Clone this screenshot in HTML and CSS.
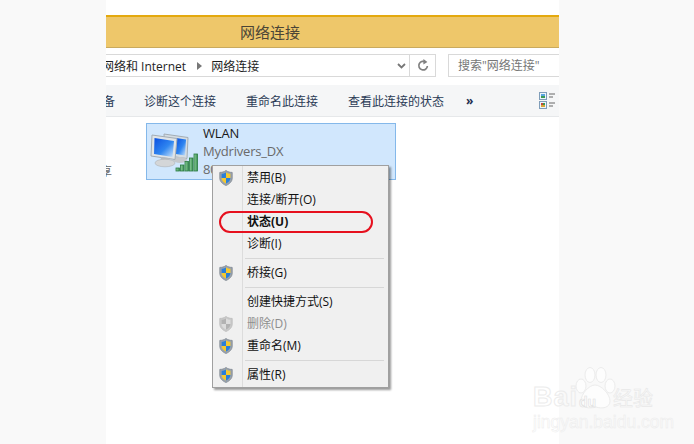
FILE: index.html
```html
<!DOCTYPE html>
<html lang="zh-CN">
<head>
    <meta charset="UTF-8">
    <title>网络连接</title>
    <link rel="stylesheet" href="styles.css">
</head>

<body>
    <svg class="defs">
        <defs>
            <symbol id="shield" viewBox="0 0 14 16">
                <path d="M7 .5C5 2 3 2.400 .8 2.400V8c0 3.600 2.600 5.900 6.200 7.500 3.600-1.600 6.200-3.900 6.200-7.500V2.400C11 2.400 9 2 7 .5z" fill="#9aa3ad" stroke="#7d8791" stroke-width=".8"/>
                <path d="M7 2.400C5.600 3.300 4.200 3.700 2.600 3.800V8H7z" fill="#2a7fd8"/>
                <path d="M7 2.400C8.400 3.300 9.800 3.700 11.400 3.800V8H7z" fill="#f5c92e"/>
                <path d="M2.600 8H7v5.500C4.400 12.300 2.600 10.600 2.600 8z" fill="#f5c92e"/>
                <path d="M11.400 8H7v5.500c2.600-1.200 4.400-2.900 4.400-5.500z" fill="#2a7fd8"/>
            </symbol>
            <linearGradient id="screen" x1="0" y1="0" x2="1" y2="1">
                <stop offset="0" stop-color="#0a4fe0"/>
                <stop offset=".55" stop-color="#2f86f0"/>
                <stop offset="1" stop-color="#cfe6fb"/>
            </linearGradient>
            <linearGradient id="bar" x1="0" y1="0" x2="1" y2="0">
                <stop offset="0" stop-color="#8fcf9c"/>
                <stop offset="1" stop-color="#3b8f52"/>
            </linearGradient>
        </defs>
    </svg>

    <div class="page">
        <div class="side"></div>

        <div class="win">
            <div class="titlebar"><span>网络连接</span></div>

            <div class="addr-row">
                <div class="addr">
                    <span class="crumb">网络和 Internet</span>
                    <svg class="crumb-arrow" width="5" height="8" viewBox="0 0 5 8"><path d="M0 0l5 4-5 4z" fill="#777"/></svg>
                    <span class="crumb-now">网络连接</span>
                    <div class="addr-drop">
                        <svg width="9" height="6" viewBox="0 0 9 6"><path d="M1 1l3.500 3.500L8 1" fill="none" stroke="#777" stroke-width="1.800"/></svg>
                    </div>
                    <div class="addr-refresh">
                        <svg width="12" height="13" viewBox="0 0 12 13"><path d="M8.800 3.300A4.300 4.300 0 1 0 10.400 7" fill="none" stroke="#808080" stroke-width="1.700"/><path d="M6.400 0l4 3-4 2.600z" fill="#808080"/></svg>
                    </div>
                </div>
                <div class="search">搜索"网络连接"</div>
            </div>

            <div class="toolbar">
                <span class="tool tool-cut">备</span>
                <span class="tool tool-a">诊断这个连接</span>
                <span class="tool tool-b">重命名此连接</span>
                <span class="tool tool-c">查看此连接的状态</span>
                <span class="tool-more">»</span>
                <svg class="views" width="17" height="17" viewBox="0 0 17 17">
                    <rect x=".5" y=".5" width="7" height="7" fill="#eef5fb" stroke="#7f9db9"/>
                    <rect x="2" y="4" width="4" height="2" fill="#3b9a57"/>
                    <rect x="2" y="2" width="4" height="2" fill="#5aa5e0"/>
                    <rect x=".5" y="9.500" width="7" height="7" fill="#eef5fb" stroke="#7f9db9"/>
                    <rect x="2" y="11" width="2" height="2" fill="#c9463c"/>
                    <rect x="4" y="11" width="2" height="2" fill="#3b9a57"/>
                    <rect x="2" y="13" width="4" height="2" fill="#d8a83a"/>
                    <path d="M10 2h6M10 5h4M10 11h6M10 14h4" stroke="#666" stroke-width="1"/>
                </svg>
            </div>

            <div class="content">
                <div class="nav-cut">享</div>
                <div class="conn">
                    <svg class="conn-icon" width="50" height="50" viewBox="0 0 50 50">
                        <path d="M14 6l24 3.500-1 21-22-3z" fill="#d5dde3" stroke="#a3adb5"/>
                        <path d="M26 10l10 1.500-1 16-9-1.500z" fill="url(#screen)"/>
                        <ellipse cx="30" cy="32" rx="7" ry="3" fill="#c6c9cc"/>
                        <path d="M2 7l25 3.500-2 21L1 28z" fill="#dfe4e8" stroke="#a3adb5"/>
                        <path d="M4.500 10l19.500 3-1.500 16L4 26z" fill="url(#screen)"/>
                        <path d="M11 29l8 1 .5 3.500-9-1z" fill="#b5babf"/>
                        <ellipse cx="15" cy="35" rx="10" ry="3.800" fill="#d4d6d8" stroke="#aeb2b6" stroke-width=".6"/>
                        <g fill="url(#bar)" stroke="#2a7a42" stroke-width=".8">
                            <rect x="26" y="40" width="3.500" height="3"/>
                            <rect x="30.500" y="37" width="3.500" height="6"/>
                            <rect x="35" y="33.500" width="3.500" height="9.500"/>
                            <rect x="39.500" y="30" width="3.500" height="13"/>
                            <rect x="44" y="26" width="3.500" height="17"/>
                        </g>
                    </svg>
                    <div class="conn-text">
                        <div class="conn-name">WLAN</div>
                        <div class="conn-sub">Mydrivers_DX</div>
                        <div class="conn-sub">802.11n</div>
                    </div>
                </div>
            </div>
        </div>

        <div class="side"></div>
    </div>

    <div class="menu">
        <div class="mi"><svg class="shield"><use href="#shield"/></svg>禁用(B)</div>
        <div class="mi">连接/断开(O)</div>
        <div class="mi mi-bold">状态(U)</div>
        <div class="mi">诊断(I)</div>
        <div class="sep"></div>
        <div class="mi"><svg class="shield"><use href="#shield"/></svg>桥接(G)</div>
        <div class="sep"></div>
        <div class="mi">创建快捷方式(S)</div>
        <div class="mi mi-off"><svg class="shield shield-off"><use href="#shield"/></svg>删除(D)</div>
        <div class="mi"><svg class="shield"><use href="#shield"/></svg>重命名(M)</div>
        <div class="sep"></div>
        <div class="mi"><svg class="shield"><use href="#shield"/></svg>属性(R)</div>
    </div>

    <div class="ring"></div>

    <div class="mark">
        <div class="mark-top">
            <span class="mark-bai">Bai</span>
            <svg class="mark-paw" width="42" height="46" viewBox="0 0 42 46">
                <g fill="#fdfdfd" stroke="#ececec">
                    <ellipse cx="15" cy="9" rx="5" ry="7.500"/>
                    <ellipse cx="26" cy="9" rx="5" ry="7.500"/>
                    <ellipse cx="6" cy="20" rx="5" ry="7"/>
                    <ellipse cx="35" cy="20" rx="5" ry="7"/>
                    <path d="M20 19c6 0 15 9 15 16 0 7-8 8-14 6-7 2-15 1-15-6 0-7 8-16 14-16z"/>
                </g>
            </svg>
            <span class="mark-du">du</span>
            <span class="mark-jy">经验</span>
        </div>
        <div class="mark-url">jingyan.baidu.com</div>
    </div>
</body>
</html>
```

FILE: styles.css
```css
body {
    margin: 0;
    height: 444px;
    overflow: hidden;
    background: #fff;
    color: #1e1e1e;
    font-family: "Open Sans", "Noto Sans CJK SC", sans-serif;
    font-size: 12px;
    position: relative;
}

.defs {
    position: absolute;
    width: 0;
    height: 0;
}

.page {
    display: grid;
    grid-template-columns: 106px 453px 1fr;
    height: 444px;
}

.side {
    background: #f9f9f9;
}

.win {
    padding-top: 15px;
    overflow: hidden;
}

.titlebar {
    height: 30px;
    border-top: 2px solid #e4a90e;
    border-bottom: 1px solid #c9aa5e;
    background: #eec76a;
    padding-left: 134px;
    font-size: 15px;
    line-height: 30px;
    color: #4a4436;
}

.addr-row {
    display: flex;
    margin-top: 6px;
    height: 23px;
}

.addr {
    width: 330px;
    display: flex;
    align-items: center;
    border: 1px solid #d9d9d9;
    border-left: none;
    box-sizing: border-box;
    overflow: hidden;
}

.crumb {
    margin-left: -4px;
    white-space: nowrap;
}

.crumb-arrow {
    margin: 0 9px 0 11px;
}

.crumb-now {
    white-space: nowrap;
}

.addr-drop {
    margin-left: auto;
    width: 15px;
    height: 100%;
    display: flex;
    align-items: center;
    justify-content: center;
}

.addr-refresh {
    width: 25px;
    height: 100%;
    border-left: 1px solid #d9d9d9;
    display: flex;
    align-items: center;
    justify-content: center;
}

.search {
    margin-left: 12px;
    flex: 1;
    border: 1px solid #d9d9d9;
    border-right: none;
    padding-left: 9px;
    line-height: 21px;
    color: #777;
}

.toolbar {
    position: relative;
    display: flex;
    align-items: center;
    margin-top: 8px;
    height: 31px;
    border-bottom: 1px solid #e6e8ea;
    background: #f5f6f7;
    color: #2a3a55;
    overflow: hidden;
    white-space: nowrap;
}

.tool-cut {
    margin-left: -3px;
}

.tool-a {
    margin-left: 29px;
}

.tool-b,
.tool-c {
    margin-left: 30px;
}

.tool-more {
    margin-left: 22px;
    font-size: 12px;
    font-weight: 700;
    line-height: 12px;
    color: #1d2f50;
}

.views {
    margin-left: auto;
    margin-right: 3px;
}

.content {
    display: flex;
    padding-top: 6px;
    position: relative;
}

.nav-cut {
    width: 40px;
    margin-left: -6px;
    margin-right: -34px;
    padding-top: 39px;
    color: #666;
}

.conn {
    margin-left: 40px;
    width: 250px;
    height: 57px;
    box-sizing: border-box;
    border: 1px solid #84b8ea;
    background: #d1e7fd;
    display: flex;
    padding-left: 3px;
}

.conn-icon {
    flex: none;
    margin-top: 4px;
}

.conn-text {
    margin-left: 3px;
    font-size: 13px;
    line-height: 18px;
    letter-spacing: -0.2px;
}

.conn-name {
    color: #1a1a1a;
}

.conn-sub {
    color: #6a6a6a;
}

.menu {
    position: absolute;
    left: 212px;
    top: 165px;
    width: 177px;
    height: 223px;
    box-sizing: border-box;
    padding: 1px 1px 0;
    border: 1px solid #a0a0a0;
    background: linear-gradient(to right, #f0f0f0 29px, #dcdcdc 29px, #dcdcdc 30px, #f0f0f0 30px);
    box-shadow: 2px 2px 2px rgba(0, 0, 0, 0.4);
    color: #111;
}

.mi {
    position: relative;
    height: 22px;
    line-height: 22px;
    padding-left: 33px;
    font-size: 12px;
}

.mi-bold {
    font-weight: 700;
}

.mi-off {
    color: #8e8e8e;
}

.shield {
    position: absolute;
    left: 5px;
    top: 3px;
    width: 14px;
    height: 16px;
}

.shield-off {
    filter: grayscale(1) opacity(0.5);
}

.sep {
    height: 1px;
    margin: 3px 3px 3px 31px;
    background: #d7d7d7;
}

.ring {
    position: absolute;
    left: 219px;
    top: 211px;
    width: 154px;
    height: 22px;
    box-sizing: border-box;
    border: 2px solid #e6101e;
    border-radius: 11px;
}

.mark {
    position: absolute;
    left: 533px;
    top: 368px;
    width: 140px;
    color: transparent;
    font-family: "Liberation Sans", sans-serif;
    -webkit-text-stroke: 1px #ececec;
}

.mark-top {
    display: flex;
    align-items: flex-end;
    height: 44px;
}

.mark-bai {
    font-size: 27px;
    font-weight: 700;
    line-height: 30px;
    letter-spacing: 1px;
}

.mark-paw {
    margin-left: -3px;
    flex: none;
}

.mark-du {
    position: absolute;
    left: 46px;
    top: 26px;
    font-size: 14px;
    font-weight: 700;
    -webkit-text-stroke: 0.6px #e0e0e0;
}

.mark-jy {
    font-family: "Noto Sans CJK SC", sans-serif;
    font-size: 20px;
    line-height: 28px;
    margin-left: -4px;
    -webkit-text-stroke: 0.6px #e8e8e8;
    white-space: nowrap;
}

.mark-url {
    font-size: 17.5px;
    line-height: 20px;
    margin-top: 0;
    white-space: nowrap;
    -webkit-text-stroke: 0.5px #ececec;
}
```
